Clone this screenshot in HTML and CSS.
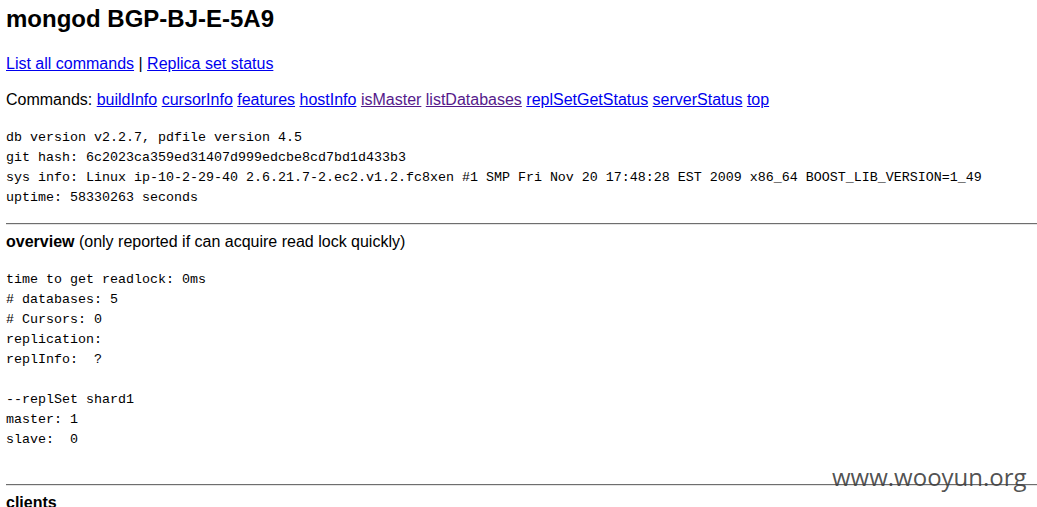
FILE: index.html
```html
<!DOCTYPE html>
<html>
<head>
<meta charset="utf-8">
<title>mongod BGP-BJ-E-5A9</title>
<link rel="stylesheet" href="styles.css">
</head>
<body>
<h2 class="title">mongod BGP-BJ-E-5A9</h2>
<p class="nav"><a href="#">List all commands</a> | <a href="#">Replica set status</a></p>
<p class="commands">Commands: <a href="#">buildInfo</a> <a href="#">cursorInfo</a> <a href="#">features</a> <a href="#">hostInfo</a> <a class="visited" href="#">isMaster</a> <a class="visited" href="#">listDatabases</a> <a href="#">replSetGetStatus</a> <a href="#">serverStatus</a> <a href="#">top</a></p>
<pre class="info">db version v2.2.7, pdfile version 4.5
git hash: 6c2023ca359ed31407d999edcbe8cd7bd1d433b3
sys info: Linux ip-10-2-29-40 2.6.21.7-2.ec2.v1.2.fc8xen #1 SMP Fri Nov 20 17:48:28 EST 2009 x86_64 BOOST_LIB_VERSION=1_49
uptime: 58330263 seconds</pre>
<hr class="rule">
<p class="section"><b>overview</b> (only reported if can acquire read lock quickly)</p>
<pre class="info overview">time to get readlock: 0ms
# databases: 5
# Cursors: 0
replication: 
replInfo:  ?

--replSet shard1
master: 1
slave:  0

</pre>
<hr class="rule rule-after-overview">
<p class="section"><b>clients</b></p>
<div class="watermark">www.wooyun.org</div>
</body>
</html>
```
FILE: styles.css
```css
html {
  overflow: hidden;
}
body {
  margin: 0;
  padding: 0 0 0 6px;
  font-family: "Liberation Sans", Arial, sans-serif;
  font-size: 16px;
  color: #000;
  background: #fff;
  position: relative;
  min-height: 507px;
}
a {
  color: #0000ee;
  text-decoration: underline;
}
a.visited {
  color: #551a8b;
}
.title {
  margin: 5px 0 0;
  font-size: 24px;
  line-height: 28px;
  font-weight: bold;
}
.nav {
  margin: 22px 0 0;
  line-height: 18px;
}
.commands {
  margin: 18px 0 0;
  line-height: 18px;
}
.info {
  margin: 19px 0 0;
  font-family: "Liberation Mono", "Courier New", monospace;
  font-size: 13.33px;
  line-height: 20px;
  white-space: pre;
}
.overview {
  margin-top: 19px;
}
.rule {
  margin: 15px 0 0;
  height: 0;
  border: 0;
  border-top: 1px solid #6e6e6e;
  border-bottom: 1px solid #e4e4e4;
}
.rule-after-overview {
  margin-top: 14px;
}
.section {
  margin: 8px 0 0;
  line-height: 18px;
}
.watermark {
  position: absolute;
  left: 832px;
  top: 465px;
  font-family: "Open Sans", sans-serif;
  font-size: 24px;
  line-height: 24px;
  color: rgba(60, 60, 60, 0.9);
  white-space: nowrap;
}
```
